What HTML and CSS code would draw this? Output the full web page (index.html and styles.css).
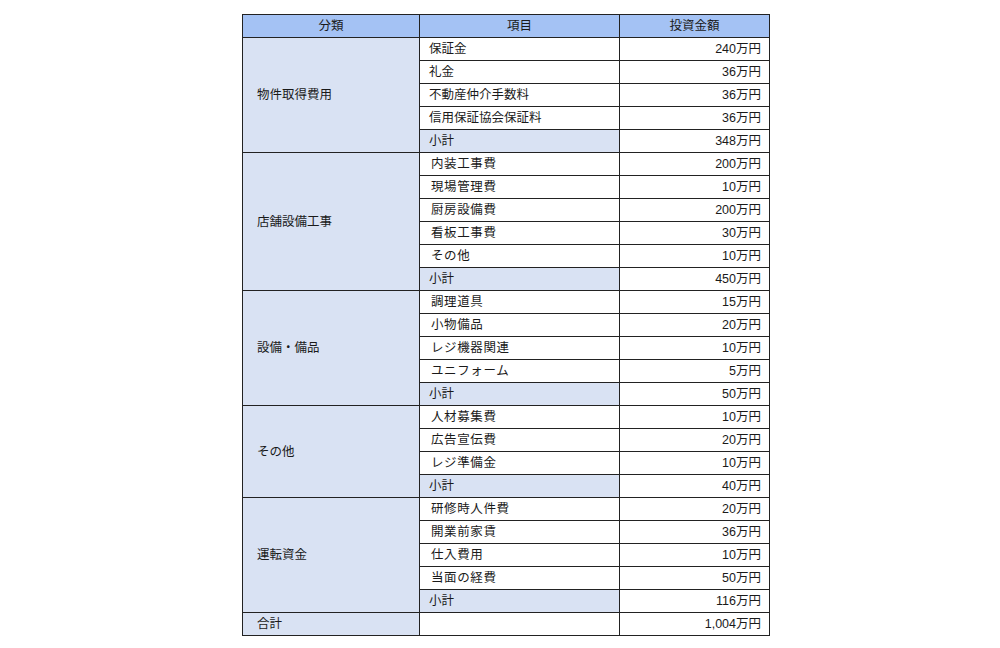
FILE: index.html
```html
<!DOCTYPE html>
<html lang="ja">
<head>
<meta charset="utf-8">
<title>投資金額</title>
<link rel="stylesheet" href="styles.css">
</head>
<body>
<div class="page">
<table class="budget">
  <colgroup><col class="c1"><col class="c2"><col class="c3"></colgroup>
  <thead>
    <tr><th>分類</th><th>項目</th><th>投資金額</th></tr>
  </thead>
  <tbody>
    <tr><td class="cat" rowspan="5">物件取得費用</td><td class="item">保証金</td><td class="amt">240万円</td></tr>
    <tr><td class="item">礼金</td><td class="amt">36万円</td></tr>
    <tr><td class="item">不動産仲介手数料</td><td class="amt">36万円</td></tr>
    <tr><td class="item">信用保証協会保証料</td><td class="amt">36万円</td></tr>
    <tr><td class="item sub">小計</td><td class="amt">348万円</td></tr>

    <tr><td class="cat" rowspan="6">店舗設備工事</td><td class="item sp">内装工事費</td><td class="amt">200万円</td></tr>
    <tr><td class="item sp">現場管理費</td><td class="amt">10万円</td></tr>
    <tr><td class="item sp">厨房設備費</td><td class="amt">200万円</td></tr>
    <tr><td class="item sp">看板工事費</td><td class="amt">30万円</td></tr>
    <tr><td class="item sp">その他</td><td class="amt">10万円</td></tr>
    <tr><td class="item sub">小計</td><td class="amt">450万円</td></tr>

    <tr><td class="cat" rowspan="5">設備・備品</td><td class="item sp">調理道具</td><td class="amt">15万円</td></tr>
    <tr><td class="item sp">小物備品</td><td class="amt">20万円</td></tr>
    <tr><td class="item sp">レジ機器関連</td><td class="amt">10万円</td></tr>
    <tr><td class="item sp">ユニフォーム</td><td class="amt">5万円</td></tr>
    <tr><td class="item sub">小計</td><td class="amt">50万円</td></tr>

    <tr><td class="cat" rowspan="4">その他</td><td class="item sp">人材募集費</td><td class="amt">10万円</td></tr>
    <tr><td class="item sp">広告宣伝費</td><td class="amt">20万円</td></tr>
    <tr><td class="item sp">レジ準備金</td><td class="amt">10万円</td></tr>
    <tr><td class="item sub">小計</td><td class="amt">40万円</td></tr>

    <tr><td class="cat" rowspan="5">運転資金</td><td class="item sp">研修時人件費</td><td class="amt">20万円</td></tr>
    <tr><td class="item sp">開業前家賃</td><td class="amt">36万円</td></tr>
    <tr><td class="item sp">仕入費用</td><td class="amt">10万円</td></tr>
    <tr><td class="item sp">当面の経費</td><td class="amt">50万円</td></tr>
    <tr><td class="item sub">小計</td><td class="amt">116万円</td></tr>

    <tr><td class="cat">合計</td><td class="item"></td><td class="amt">1,004万円</td></tr>
  </tbody>
</table>
</div>
</body>
</html>
```

FILE: styles.css
```css
html, body {
  margin: 0;
  padding: 0;
  background: #ffffff;
}

.page {
  padding: 14px 0 0 242px;
}

.budget {
  border-collapse: collapse;
  table-layout: fixed;
  width: 527px;
  font-family: "Liberation Sans", "Noto Sans CJK JP", sans-serif;
  font-size: 12.5px;
  color: #1a1a1a;
}

.c1 { width: 177px; }
.c2 { width: 200px; }
.c3 { width: 150px; }

.budget th,
.budget td {
  border: 1px solid #222222;
  height: 22px;
  padding: 0;
  line-height: 14px;
  white-space: nowrap;
}

.budget th {
  background: #a4c2f4;
  font-weight: normal;
  text-align: center;
}

.cat {
  background: #d9e2f3;
  padding-left: 14px !important;
  text-align: left;
}

.item {
  background: #ffffff;
  padding-left: 9px !important;
}

.item.sp {
  padding-left: 11px !important;
  letter-spacing: 0.6px;
}

.item.sub {
  background: #d9e2f3;
}

.amt {
  background: #ffffff;
  text-align: right;
  padding-right: 8px !important;
}
```
